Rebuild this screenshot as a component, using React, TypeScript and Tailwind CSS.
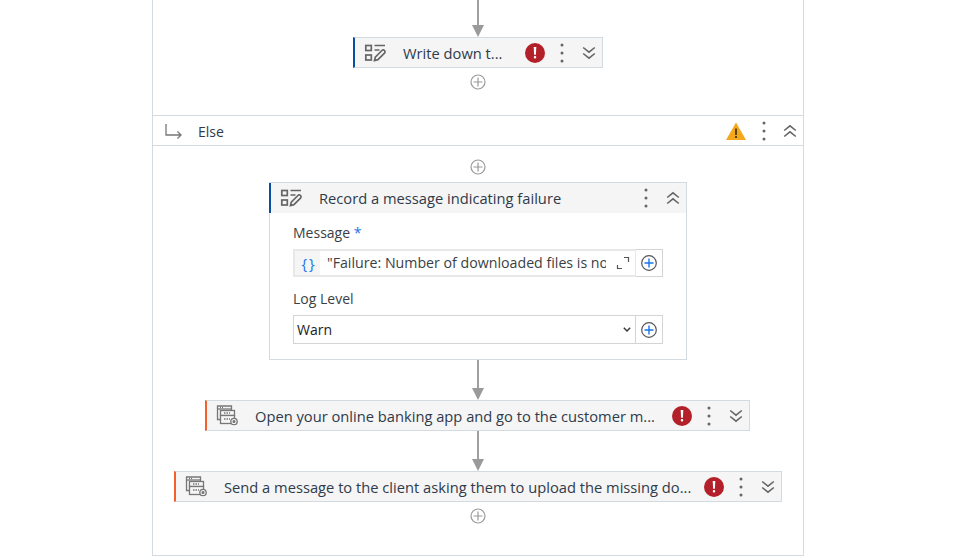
import type { ReactNode } from "react"

function ActivityIcon() {
  return (
    <svg width="22" height="20" viewBox="0 0 22 20" fill="none" stroke="#666" strokeWidth="1.700" className="shrink-0">
      <rect x="1.800" y="2.500" width="5.500" height="5" />
      <rect x="1.800" y="12" width="5.500" height="5" />
      <path d="M10.500 2.500H21M10.500 7H15.500M10.500 17.500l.8-3.400 6.600-6.600a1.600 1.600 0 0 1 2.600 2.600l-6.600 6.600z" />
    </svg>
  )
}

function WindowIcon() {
  return (
    <svg width="22" height="21" viewBox="0 0 22 21" fill="none" stroke="#777" strokeWidth="1.300" className="shrink-0">
      <path d="M4 14.500H1.500V1h14v4.500" />
      <path d="M1.500 4h14" />
      <path d="M4 2.500h4" strokeDasharray="1 1" />
      <rect x="4.500" y="5.500" width="14" height="5" fill="#f5f5f5" />
      <rect x="4.500" y="10.500" width="14" height="8" fill="#f5f5f5" />
      <path d="M8 8h6M8 14h6" strokeDasharray="1.500 1" />
      <circle cx="18" cy="16.500" r="3.200" fill="#f5f5f5" />
      <circle cx="18" cy="16.500" r="0.900" fill="#777" />
    </svg>
  )
}

function ErrorIcon() {
  return (
    <span className="flex h-5 w-5 shrink-0 items-center justify-center rounded-full bg-[#b3202a]">
      <svg width="4" height="12" viewBox="0 0 4 12" fill="#fff">
        <path d="M.7 0h2.600l-.4 7.800H1.100z" />
        <rect x="0.800" y="9" width="2.400" height="2.400" rx="1" />
      </svg>
    </span>
  )
}

function WarningIcon() {
  return (
    <svg width="20" height="18" viewBox="0 0 20 18" className="shrink-0">
      <path d="M10 0.500 20 18H0z" fill="#f5a81c" />
      <rect x="9" y="6.500" width="2" height="6.500" fill="#5a4510" />
      <rect x="9" y="14" width="2" height="2" fill="#5a4510" />
    </svg>
  )
}

function Dots() {
  return (
    <svg width="4" height="20" viewBox="0 0 4 20" fill="#666" className="shrink-0">
      <circle cx="2" cy="2" r="1.500" />
      <circle cx="2" cy="10" r="1.500" />
      <circle cx="2" cy="18" r="1.500" />
    </svg>
  )
}

function Chevrons({ up }: { up?: boolean }) {
  return (
    <svg width="14" height="14" viewBox="0 0 14 14" fill="none" stroke="#666" strokeWidth="1.600" className="shrink-0">
      {up ? <path d="M1.200 6.500 7 1.800l5.800 4.700M1.200 12.500 7 7.800l5.800 4.700" /> : <path d="M1.200 1.500 7 6.200l5.800-4.700M1.200 7.500 7 12.200l5.800-4.700" />}
    </svg>
  )
}

function AddButton() {
  return (
    <svg width="16" height="16" viewBox="0 0 16 16" fill="none" stroke="#9a9a9a" strokeWidth="1.200">
      <circle cx="8" cy="8" r="7" />
      <path d="M8 3.500v9M3.500 8h9" />
    </svg>
  )
}

function BlueAdd() {
  return (
    <span className="flex h-full w-[27px] shrink-0 items-center justify-center border border-l-0 border-[#d4d4d4] bg-white">
      <svg width="16" height="16" viewBox="0 0 16 16" fill="none" strokeWidth="1.200">
        <circle cx="8" cy="8" r="7.300" stroke="#555" />
        <path d="M8 3.500v9M3.500 8h9" stroke="#1a73e8" strokeWidth="1.400" />
      </svg>
    </span>
  )
}

function Arrow({ height }: { height: string }) {
  return (
    <div className={`flex flex-col items-center ${height}`}>
      <div className="w-[2px] flex-1 bg-[#a0a0a0]" />
      <div className="h-0 w-0 border-x-[6px] border-t-[12px] border-x-transparent border-t-[#9a9a9a]" />
    </div>
  )
}

function Collapsed({ icon, title, accent, width }: { icon: ReactNode; title: string; accent: string; width: string }) {
  return (
    <div className={`flex h-[31px] items-center border border-l-2 border-[#d3dbe1] bg-[#f5f5f5] pl-[9px] pr-[6px] ${width} ${accent}`}>
      {icon}
      <span className="ml-[17px] flex-1 whitespace-nowrap pt-px text-[14.700px] text-[#2f3b4a]">{title}</span>
      <ErrorIcon />
      <span className="ml-[15px]"><Dots /></span>
      <span className="ml-[18px]"><Chevrons /></span>
    </div>
  )
}

export default function App() {
  return (
    <div className="h-[560px] w-[962px] overflow-hidden bg-white font-['Open_Sans',sans-serif]">
      <div className="ml-[152px] flex h-[556px] w-[652px] flex-col items-center border-x border-b border-[#d3dbe1]">
        <Arrow height="h-[37px]" />
        <Collapsed
          icon={<ActivityIcon />}
          title="Write down t..."
          accent="border-l-[#0a4ea2]"
          width="w-[250px]"
        />
        <div className="mt-[6px] flex"><AddButton /></div>

        {/* Else branch */}
        <div className="mt-[25px] flex h-[31px] w-full items-center border-y border-[#d3dbe1] pl-[12px] pr-[6px]">
          <svg width="18" height="16" viewBox="0 0 18 16" fill="none" stroke="#777" strokeWidth="1.300" className="shrink-0">
            <path d="M1 1v11h15M12.500 8.500 16 12l-3.500 3.500" />
          </svg>
          <span className="ml-[15px] flex-1 pt-px text-[14px] text-[#2f3b4a]">Else</span>
          <WarningIcon />
          <span className="ml-[16px]"><Dots /></span>
          <span className="ml-[17px]"><Chevrons up /></span>
        </div>
        <div className="mt-[13px] flex"><AddButton /></div>

        {/* Expanded log message */}
        <div className="mt-[7px] w-[418px] border border-[#d3dbe1]">
          <div className="-ml-px flex h-[30px] items-center border-l-2 border-l-[#0a4ea2] bg-[#f5f5f5] pl-[9px] pr-[6px]">
            <ActivityIcon />
            <span className="ml-[17px] flex-1 text-[14.700px] text-[#2f3b4a]">Record a message indicating failure</span>
            <Dots />
            <span className="ml-[18px]"><Chevrons up /></span>
          </div>
          <div className="px-[23px] pt-[10px] pb-[15px] text-[14px] text-[#3a3f45]">
            <div className="leading-[20px]">Message <span className="text-[#1a73e8]">*</span></div>
            <div className="mt-[6px] flex h-[28px]">
              <div className="flex min-w-0 flex-1 items-center border-2 border-r border-[#e8e8e8] bg-white">
                <span className="flex h-full w-[25px] shrink-0 items-center justify-center bg-[#f5f5f5] text-[15px] tracking-[-1px] text-[#1a73e8]">{"{ }"}</span>
                <span className="ml-[7px] w-[279px] overflow-hidden whitespace-nowrap text-[14.200px] text-[#3a3f45]">"Failure: Number of downloaded files is not</span>
                <svg width="14" height="14" viewBox="0 0 14 14" fill="none" stroke="#555" strokeWidth="1.200" className="ml-[10px] shrink-0">
                  <path d="M1.500 9v3.500H6M8 1.500h4.500V6" />
                </svg>
              </div>
              <BlueAdd />
            </div>
            <div className="mt-[12px] leading-[20px]">Log Level</div>
            <div className="mt-[6px] flex h-[29px]">
              <div className="flex flex-1 items-center border border-[#d4d4d4] bg-white pl-[3px] pr-[4px] text-[#222]">
                <span className="flex-1">Warn</span>
                <svg width="8" height="5" viewBox="0 0 8 5" fill="none" stroke="#333" strokeWidth="1.400">
                  <path d="M.8.800 4 4 7.200.8" />
                </svg>
              </div>
              <BlueAdd />
            </div>
          </div>
        </div>

        <Arrow height="h-[40px]" />
        <Collapsed
          icon={<WindowIcon />}
          title="Open your online banking app and go to the customer m..."
          accent="border-l-[#f2602b] mr-[1px]"
          width="w-[545px]"
        />
        <Arrow height="h-[40px]" />
        <Collapsed
          icon={<WindowIcon />}
          title="Send a message to the client asking them to upload the missing do..."
          accent="border-l-[#f2602b]"
          width="w-[608px]"
        />
        <div className="mt-[6px] flex"><AddButton /></div>
      </div>
    </div>
  )
}
